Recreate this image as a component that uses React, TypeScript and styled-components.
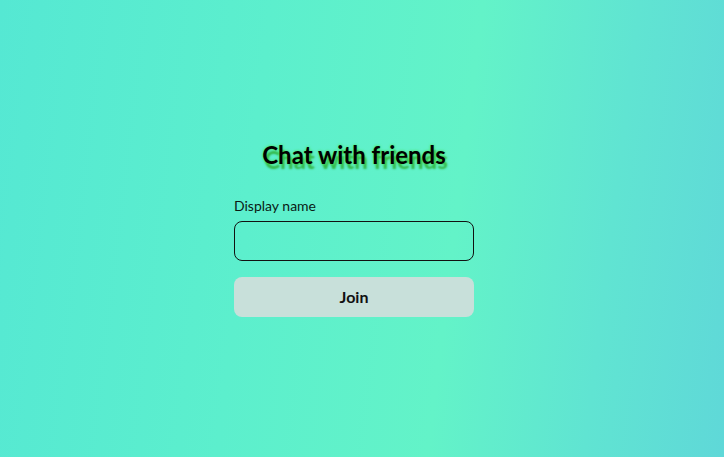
import React, { useState } from "react";
import styled, { createGlobalStyle } from "styled-components";

const GlobalStyle = createGlobalStyle`
  html, body {
    margin: 0;
    padding: 0;
  }
  body {
    font-family: Lato, "Open Sans", sans-serif;
  }
`;

const Page = styled.main`
  min-height: 100vh;
  box-sizing: border-box;
  padding: 2px 16px 0 0;
  display: flex;
  align-items: center;
  justify-content: center;
  background: linear-gradient(97deg, #55e8d3 0%, #5cefcd 35%, #63f3c8 62%, #60e4d2 82%, #5fd8d8 100%);
`;

const Card = styled.form`
  width: 240px;
  display: flex;
  flex-direction: column;
`;

const Title = styled.h1`
  margin: 0 0 30px;
  font-size: 24px;
  line-height: 24px;
  font-weight: 700;
  text-align: center;
  color: #000;
  text-shadow: 0 0 3px #40e040, 2px 5px 2px #34b848;
`;

const Label = styled.label`
  font-size: 14px;
  line-height: 17px;
  color: #0a1a14;
  margin-bottom: 7px;
`;

const Input = styled.input`
  box-sizing: border-box;
  height: 40px;
  width: 100%;
  border: 1px solid #111;
  border-radius: 8px;
  background: transparent;
  padding: 0 12px;
  font: inherit;
  font-size: 15px;
  outline: none;
`;

const JoinButton = styled.button`
  margin-top: 16px;
  height: 40px;
  border: none;
  border-radius: 8px;
  background: #c8e0da;
  color: #111;
  font-family: Lato, sans-serif;
  font-size: 16px;
  font-weight: 700;
  cursor: pointer;
`;

export default function App() {
  const [name, setName] = useState("");
  return (
    <>
      <GlobalStyle />
      <Page>
        <Card onSubmit={(e) => e.preventDefault()}>
          <Title>Chat with friends</Title>
          <Label htmlFor="display-name">Display name</Label>
          <Input id="display-name" value={name} onChange={(e) => setName(e.target.value)} />
          <JoinButton type="submit">Join</JoinButton>
        </Card>
      </Page>
    </>
  );
}
